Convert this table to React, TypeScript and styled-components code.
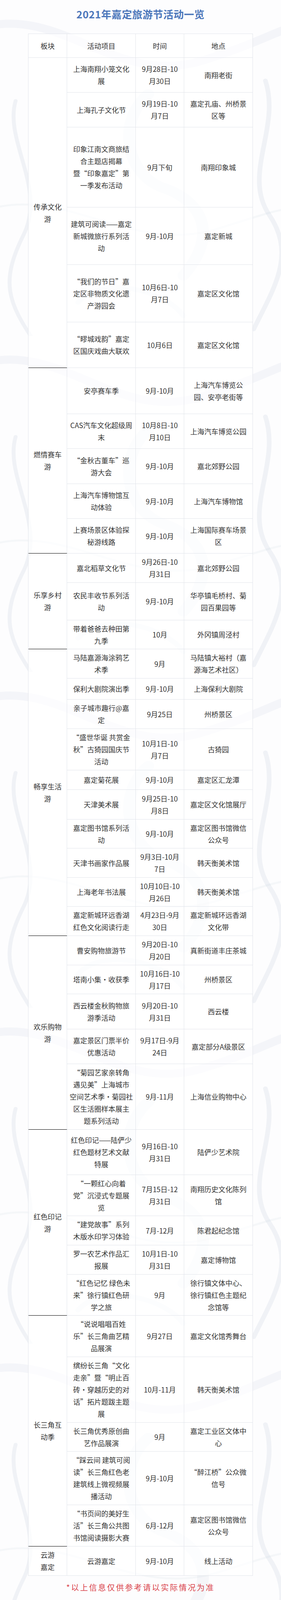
import React from "react";
import styled, { createGlobalStyle } from "styled-components";

const GlobalStyle = createGlobalStyle`
  html, body {
    margin: 0;
    padding: 0;
    background: #ffffff;
  }
  body {
    font-family: "Noto Sans CJK SC", "Noto Sans", sans-serif;
  }
`;

const swirlSvg = `<svg xmlns='http://www.w3.org/2000/svg' width='720' height='860' viewBox='0 0 720 1000' preserveAspectRatio='none'>
<g fill='none' stroke-linecap='round'>
<path d='M-40 80 C 160 20 300 260 520 180 S 760 40 780 120' stroke='#b8c3d6' stroke-opacity='0.13' stroke-width='24'/>
<path d='M40 300 C 10 420 120 560 60 700 S 20 900 90 1020' stroke='#aebbd0' stroke-opacity='0.16' stroke-width='10'/>
<path d='M680 240 C 720 380 620 520 690 640 S 700 860 650 980' stroke='#aebbd0' stroke-opacity='0.16' stroke-width='12'/>
<path d='M380 280 C 300 360 320 520 420 560 S 560 700 470 820' stroke='#c3ccdb' stroke-opacity='0.12' stroke-width='30'/>
<path d='M-20 620 C 180 560 340 760 560 680 S 760 600 780 700' stroke='#b8c3d6' stroke-opacity='0.1' stroke-width='6'/>
<path d='M200 900 C 260 820 420 860 470 940' stroke='#c3ccdb' stroke-opacity='0.12' stroke-width='14'/>
</g></svg>`;

const swirlUrl = `url("data:image/svg+xml,${encodeURIComponent(swirlSvg)}")`;

const Page = styled.div`
  width: 720px;
  height: 4096px;
  box-sizing: border-box;
  padding-top: 20px;
  overflow: hidden;
  background-color: #fdfdfe;
  background-image: ${swirlUrl};
  background-repeat: repeat-y;
  background-size: 720px 860px;
  display: flex;
  flex-direction: column;
  align-items: center;
`;

const Title = styled.h1`
  margin: 0;
  height: 32px;
  font-size: 26px;
  line-height: 32px;
  font-weight: 700;
  letter-spacing: 0.5px;
  color: #4b76ba;
`;

const Board = styled.div<{ $rows: string }>`
  margin-top: 34px;
  width: 576px;
  box-sizing: border-box;
  display: grid;
  grid-template-columns: 99px 176px 124px 176px;
  grid-template-rows: ${(p) => p.$rows};
  border-top: 1px solid #e2e5eb;
  border-left: 1px solid #e2e5eb;
  font-size: 18px;
  line-height: 31px;
  color: #333333;
`;

const Cell = styled.div`
  box-sizing: border-box;
  min-width: 0;
  border-right: 1px solid #e2e5eb;
  border-bottom: 1px solid #e2e5eb;
  padding: 0 4px;
  display: flex;
  flex-direction: column;
  align-items: center;
  justify-content: center;
  text-align: center;
  white-space: nowrap;
  background: rgba(255, 255, 255, 0.72);
`;

const CategoryCell = styled(Cell)<{ $span: number; $closing: boolean }>`
  grid-column: 1;
  grid-row: span ${(p) => p.$span};
  border-bottom-color: ${(p) => (p.$closing ? "#000000" : "#e2e5eb")};
`;

const Line = styled.span`
  display: block;
`;

const Note = styled.p`
  margin: 17px 0 0;
  font-size: 20px;
  line-height: 26px;
  letter-spacing: 3px;
  color: #d9434b;
`;

type Item = { act: string[]; time: string[]; place: string[]; h: number };
type Group = { name: string[]; items: Item[] };

const groups: Group[] = [
  {
    name: ["传承文化", "游"],
    items: [
      { act: ["上海南翔小笼文化", "展"], time: ["9月28日-10", "月30日"], place: ["南翔老街"], h: 89 },
      { act: ["上海孔子文化节"], time: ["9月19日-10", "月7日"], place: ["嘉定孔庙、州桥景", "区等"], h: 89 },
      {
        act: ["印象江南文商旅结", "合主题店揭幕", "暨“印象嘉定”第", "一季发布活动"],
        time: ["9月下旬"],
        place: ["南翔印象城"],
        h: 205,
      },
      { act: ["建筑可阅读——嘉定", "新城微旅行系列活", "动"], time: ["9月-10月"], place: ["嘉定新城"], h: 147 },
      {
        act: ["“我们的节日”嘉", "定区非物质文化遗", "产游园会"],
        time: ["10月6日-10", "月7日"],
        place: ["嘉定区文化馆"],
        h: 147,
      },
      { act: ["“疁城戏韵”嘉定", "区国庆戏曲大联欢"], time: ["10月6日"], place: ["嘉定区文化馆"], h: 117 },
    ],
  },
  {
    name: ["燃情赛车", "游"],
    items: [
      { act: ["安亭赛车季"], time: ["9月-10月"], place: ["上海汽车博览公", "园、安亭老街等"], h: 118 },
      { act: ["CAS汽车文化超级周", "末"], time: ["10月8日-10", "月10日"], place: ["上海汽车博览公园"], h: 89 },
      { act: ["“金秋古董车”巡", "游大会"], time: ["9月-10月"], place: ["嘉北郊野公园"], h: 90 },
      { act: ["上海汽车博物馆互", "动体验"], time: ["9月-10月"], place: ["上海汽车博物馆"], h: 89 },
      { act: ["上赛场景区体验探", "秘游线路"], time: ["9月-10月"], place: ["上海国际赛车场景", "区"], h: 89 },
    ],
  },
  {
    name: ["乐享乡村", "游"],
    items: [
      { act: ["嘉北稻草文化节"], time: ["9月26日-10", "月31日"], place: ["嘉北郊野公园"], h: 75 },
      { act: ["农民丰收节系列活", "动"], time: ["9月-10月"], place: ["华亭镇毛桥村、菊", "园百果园等"], h: 96 },
      { act: ["带着爸爸去种田第", "九季"], time: ["10月"], place: ["外冈镇周泾村"], h: 74 },
    ],
  },
  {
    name: ["畅享生活", "游"],
    items: [
      { act: ["马陆嘉源海涂鸦艺", "术季"], time: ["9月"], place: ["马陆镇大裕村（嘉", "源海艺术社区）"], h: 75 },
      { act: ["保利大剧院演出季"], time: ["9月-10月"], place: ["上海保利大剧院"], h: 54 },
      { act: ["亲子城市趣行@嘉", "定"], time: ["9月25日"], place: ["州桥景区"], h: 75 },
      {
        act: ["“盛世华诞 共赏金", "秋”古猗园国庆节", "活动"],
        time: ["10月1日-10", "月7日"],
        place: ["古猗园"],
        h: 106,
      },
      { act: ["嘉定菊花展"], time: ["9月-10月"], place: ["嘉定区汇龙潭"], h: 50 },
      { act: ["天津美术展"], time: ["9月25日-10", "月8日"], place: ["嘉定区文化馆展厅"], h: 76 },
      { act: ["嘉定图书馆系列活", "动"], time: ["9月-10月"], place: ["嘉定区图书馆微信", "公众号"], h: 74 },
      { act: ["天津书画家作品展"], time: ["9月3日-10月", "7日"], place: ["韩天衡美术馆"], h: 75 },
      { act: ["上海老年书法展"], time: ["10月10日-10", "月26日"], place: ["韩天衡美术馆"], h: 74 },
      {
        act: ["嘉定新城环远香湖", "红色文化阅读行走"],
        time: ["4月23日-9月", "30日"],
        place: ["嘉定新城环远香湖", "文化带"],
        h: 75,
      },
    ],
  },
  {
    name: ["欢乐购物", "游"],
    items: [
      { act: ["曹安购物旅游节"], time: ["9月20日-10", "月20日"], place: ["真新街道丰庄茶城"], h: 75 },
      { act: ["塔南小集·收获季"], time: ["10月16日-10", "月17日"], place: ["州桥景区"], h: 74 },
      { act: ["西云楼金秋购物旅", "游季活动"], time: ["9月20日-10", "月31日"], place: ["西云楼"], h: 90 },
      { act: ["嘉定景区门票半价", "优惠活动"], time: ["9月17日-9月", "24日"], place: ["嘉定部分A级景区"], h: 89 },
      {
        act: ["“菊园艺家亲转角", "遇见美”上海城市", "空间艺术季·菊园社", "区生活圈样本展主", "题系列活动"],
        time: ["9月-11月"],
        place: ["上海信业购物中心"],
        h: 168,
      },
    ],
  },
  {
    name: ["红色印记", "游"],
    items: [
      {
        act: ["红色印记——陆俨少", "红色题材艺术文献", "特展"],
        time: ["9月16日-10", "月31日"],
        place: ["陆俨少艺术院"],
        h: 116,
      },
      {
        act: ["“一颗红心向着", "党”沉浸式专题展", "览"],
        time: ["7月15日-12", "月31日"],
        place: ["南翔历史文化陈列", "馆"],
        h: 105,
      },
      { act: ["“建党故事”系列", "木版水印学习体验"], time: ["7月-12月"], place: ["陈君起纪念馆"], h: 75 },
      { act: ["罗一农艺术作品汇", "报展"], time: ["10月1日-10", "月31日"], place: ["嘉定博物馆"], h: 75 },
      {
        act: ["“红色记忆 绿色未", "来”徐行镇红色研", "学之旅"],
        time: ["9月"],
        place: ["徐行镇文体中心、", "徐行镇红色主题纪", "念馆等"],
        h: 105,
      },
    ],
  },
  {
    name: ["长三角互", "动季"],
    items: [
      {
        act: ["“说说唱唱百姓", "乐”长三角曲艺精", "品展演"],
        time: ["9月27日"],
        place: ["嘉定文化馆秀舞台"],
        h: 106,
      },
      {
        act: ["缤纷长三角“文化", "走亲”暨“明止百", "砖·穿越历史的对", "话”拓片题跋主题", "展"],
        time: ["10月-11月"],
        place: ["韩天衡美术馆"],
        h: 168,
      },
      { act: ["长三角优秀原创曲", "艺作品展演"], time: ["9月"], place: ["嘉定工业区文体中", "心"], h: 74 },
      {
        act: ["“踩云间 建筑可阅", "读”长三角红色老", "建筑线上微视频展", "播活动"],
        time: ["9月-10月"],
        place: ["“醉江桥”公众微", "信号"],
        h: 137,
      },
      {
        act: ["“书页间的美好生", "活”长三角公共图", "书馆阅读摄影大赛"],
        time: ["6月-12月"],
        place: ["嘉定区图书馆微信", "公众号"],
        h: 106,
      },
    ],
  },
  {
    name: ["云游", "嘉定"],
    items: [{ act: ["云游嘉定"], time: ["9月-10月"], place: ["线上活动"], h: 75 }],
  },
];

const rowTemplate = ["61px"]
  .concat(groups.flatMap((g) => g.items.map((it) => `${it.h}px`)))
  .join(" ");

const Lines = ({ lines }: { lines: string[] }) => (
  <>
    {lines.map((l, i) => (
      <Line key={i}>{l}</Line>
    ))}
  </>
);

export default function App() {
  return (
    <>
      <GlobalStyle />
      <Page>
        <Title>2021年嘉定旅游节活动一览</Title>
        <Board $rows={rowTemplate}>
          <Cell>板块</Cell>
          <Cell>活动项目</Cell>
          <Cell>时间</Cell>
          <Cell>地点</Cell>
          {groups.map((g, gi) => (
            <React.Fragment key={gi}>
              <CategoryCell $span={g.items.length} $closing={gi < groups.length - 1}>
                <Lines lines={g.name} />
              </CategoryCell>
              {g.items.map((it, i) => (
                <React.Fragment key={i}>
                  <Cell>
                    <Lines lines={it.act} />
                  </Cell>
                  <Cell>
                    <Lines lines={it.time} />
                  </Cell>
                  <Cell>
                    <Lines lines={it.place} />
                  </Cell>
                </React.Fragment>
              ))}
            </React.Fragment>
          ))}
        </Board>
        <Note>*以上信息仅供参考请以实际情况为准</Note>
      </Page>
    </>
  );
}
